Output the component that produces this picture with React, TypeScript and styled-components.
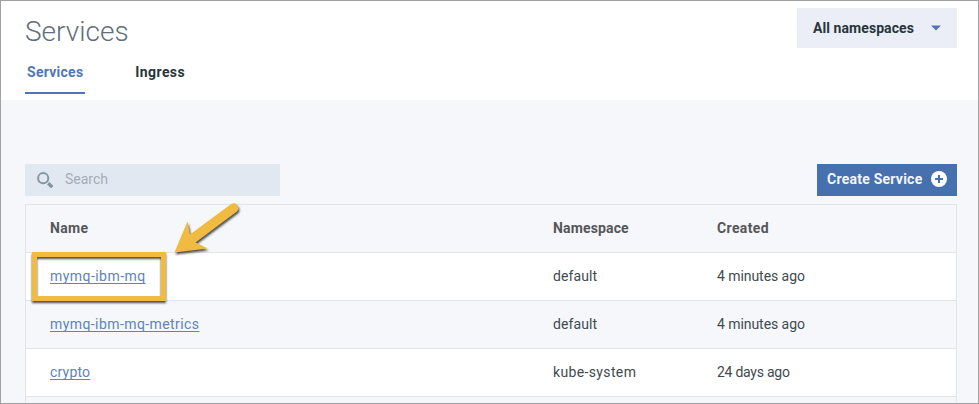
import React from "react";
import styled, { createGlobalStyle } from "styled-components";

const Global = createGlobalStyle`
  * { box-sizing: border-box; }
  body { margin: 0; font-family: Roboto, "Liberation Sans", sans-serif; font-size: 14px; color: #3f474c; }
`;

const Frame = styled.div`
  position: relative;
  width: 979px;
  height: 404px;
  overflow: hidden;
  border: 1px solid #a1a1a3;
  background: #f5f7fb;
`;

const Header = styled.header`
  display: flex;
  justify-content: space-between;
  align-items: flex-start;
  height: 99px;
  padding: 7px 21px 0 24px;
  background: #fff;
`;

const Title = styled.h1`
  margin: 5px 0 0;
  height: 38px;
  font-size: 28px;
  line-height: 38px;
  font-weight: 300;
  color: #5f6e79;
`;

const Tabs = styled.nav`
  display: flex;
  gap: 48px;
`;

const Tab = styled.a<{ $active?: boolean }>`
  height: 43px;
  padding: 11px 2px 0;
  line-height: 20px;
  font-weight: 700;
  color: ${(p) => (p.$active ? "#5077b5" : "#28353d")};
  border-bottom: 2px solid ${(p) => (p.$active ? "#5077b5" : "transparent")};
`;

const Text = styled.span<{ $track?: number }>`
  white-space: nowrap;
  letter-spacing: ${(p) => p.$track ?? 0}px;
`;

const Select = styled.button`
  display: flex;
  align-items: center;
  justify-content: space-between;
  width: 160px;
  height: 40px;
  padding: 0 16px;
  border: 0;
  background: #ebeef6;
  color: #28353d;
  font: 700 14px Roboto, sans-serif;
`;

const Toolbar = styled.div`
  display: flex;
  justify-content: space-between;
  padding: 64px 21px 8px 24px;
`;

const Search = styled.div`
  display: flex;
  align-items: center;
  gap: 12px;
  width: 255px;
  height: 32px;
  padding: 0 12px;
  background: #e2e8f2;
  color: #a4adb6;
  line-height: 28px;

  & > span {
    padding-bottom: 2px;
  }
`;

const Create = styled.button`
  display: flex;
  align-items: center;
  justify-content: space-between;
  width: 140px;
  height: 32px;
  padding: 0 10px 2px 10px;
  border: 0;
  background: #4770ae;
  color: #f3f6fc;
  font: 700 14px Roboto, sans-serif;
`;

const Table = styled.div`
  margin: 0 21px 0 24px;
  border: 1px solid #e1e5ea;
`;

const Row = styled.div<{ $tint?: boolean; $head?: boolean }>`
  display: grid;
  grid-template-columns: 503px 164px 1fr;
  align-items: center;
  height: 48px;
  padding: 0 0 2px 24px;
  line-height: 20px;
  background: ${(p) => (p.$tint ? "#f5f7fb" : "#fff")};
  border-bottom: 1px solid #e1e5ea;
  font-weight: ${(p) => (p.$head ? 700 : 400)};
  color: ${(p) => (p.$head ? "#55565a" : "#414a50")};
`;

const Link = styled.a<{ $track: number }>`
  justify-self: start;
  letter-spacing: ${(p) => p.$track}px;
  color: #6083bd;
  text-decoration: underline;
  text-decoration-skip-ink: none;
  text-underline-offset: 2px;
`;

const Highlight = styled.div`
  position: absolute;
  left: 31px;
  top: 251px;
  width: 134px;
  height: 49px;
  border: 5px solid #f1ba40;
  filter: drop-shadow(0 2px 1px rgba(45, 45, 45, 0.85));
`;

const Arrow = styled.svg`
  position: absolute;
  left: 169px;
  top: 199px;
  overflow: visible;
  filter: drop-shadow(1px 2px 1px rgba(45, 45, 45, 0.85));
`;

const rows = [
  { name: "mymq-ibm-mq", nameTrack: 0.45, ns: "default", nsTrack: 0.1, created: "4 minutes ago", createdTrack: -0.06 },
  { name: "mymq-ibm-mq-metrics", nameTrack: 0.42, ns: "default", nsTrack: 0.1, created: "4 minutes ago", createdTrack: -0.06 },
  { name: "crypto", nameTrack: 0.2, ns: "kube-system", nsTrack: 0.36, created: "24 days ago", createdTrack: -0.25 },
];

export default function App() {
  return (
    <Frame>
      <Global />
      <Header>
        <div>
          <Title>Services</Title>
          <Tabs>
            <Tab $active><Text $track={0.26}>Services</Text></Tab>
            <Tab><Text $track={0.4}>Ingress</Text></Tab>
          </Tabs>
        </div>
        <Select>
          <Text $track={0.07}>All namespaces</Text>
          <svg width="10" height="6" viewBox="0 0 10 6"><path d="M0 .5h10L5 5.5z" fill="#5077b5" /></svg>
        </Select>
      </Header>
      <Toolbar>
        <Search>
          <svg width="16" height="16" viewBox="0 0 16 16" fill="none" stroke="#8496a4">
            <circle cx="6.2" cy="6.2" r="5.1" strokeWidth="2" />
            <path d="M11.2 11.2l4 4" strokeWidth="3.4" />
          </svg>
          <Text>Search</Text>
        </Search>
        <Create>
          <Text $track={0.24}>Create Service</Text>
          <svg width="16" height="16" viewBox="0 0 16 16">
            <circle cx="8" cy="8" r="8" fill="#fff" />
            <path d="M8 4v8M4 8h8" stroke="#4770ae" strokeWidth="2" />
          </svg>
        </Create>
      </Toolbar>
      <Table>
        <Row $head $tint>
          <Text $track={0.3}>Name</Text>
          <Text $track={0.15}>Namespace</Text>
          <Text $track={0.38}>Created</Text>
        </Row>
        {rows.map((r, i) => (
          <Row key={r.name} $tint={i % 2 === 1}>
            <Link $track={r.nameTrack}>{r.name}</Link>
            <Text $track={r.nsTrack}>{r.ns}</Text>
            <Text $track={r.createdTrack}>{r.created}</Text>
          </Row>
        ))}
        <Row $tint />
      </Table>
      <Highlight />
      <Arrow width="75" height="60" viewBox="170 200 75 60">
        <path d="M174.5 252.5L187.5 221.5L190 234.5L231.2 204A4.8 4.8 0 0 1 237 211.5L195.5 242.5L207.5 248.5Z" fill="#f1ba40" />
      </Arrow>
    </Frame>
  );
}
